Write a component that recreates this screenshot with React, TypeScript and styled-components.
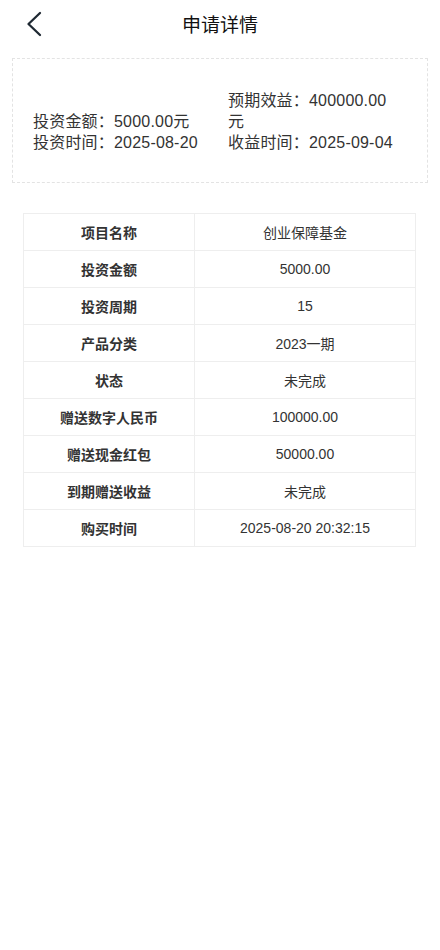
import React from 'react';
import styled, { createGlobalStyle } from 'styled-components';

const GlobalStyle = createGlobalStyle`
  html, body {
    margin: 0;
    padding: 0;
    background: #fff;
  }
  body {
    font-family: "Liberation Sans", Arial, "Noto Sans CJK SC", sans-serif;
    color: #333;
  }
`;

const Page = styled.div`
  width: 440px;
  min-height: 950px;
  background: #fff;
`;

const TopBar = styled.header`
  position: relative;
  height: 46px;
  display: flex;
  align-items: center;
  justify-content: center;
`;

const BackButton = styled.button`
  position: absolute;
  left: 22px;
  top: 10px;
  width: 24px;
  height: 28px;
  padding: 0;
  border: none;
  background: none;
  display: flex;
  align-items: center;
  justify-content: center;
`;

const Title = styled.h1`
  margin: 0;
  font-size: 19px;
  font-weight: normal;
  color: #111;
`;

const Summary = styled.section`
  margin: 12px 12px 0;
  height: 125px;
  box-sizing: border-box;
  border: 1px dashed #e3e3e3;
  padding: 2px 20px 0;
  display: grid;
  grid-template-columns: 195px 170px;
  align-content: center;
  align-items: end;
  font-size: 16px;
  line-height: 21px;
  letter-spacing: 0.2px;
  color: #333;
`;

const SummaryItem = styled.div``;

const Table = styled.table`
  margin: 30px 0 0 23px;
  width: 393px;
  border-collapse: collapse;
  font-size: 14px;
  color: #333;
`;

const Cell = styled.td<{ $label?: boolean }>`
  height: 36px;
  padding: 0;
  border: 1px solid #eeeeee;
  text-align: center;
  font-weight: ${(p) => (p.$label ? 'bold' : 'normal')};
  width: ${(p) => (p.$label ? '170px' : 'auto')};
`;

const rows: [string, string][] = [
  ['项目名称', '创业保障基金'],
  ['投资金额', '5000.00'],
  ['投资周期', '15'],
  ['产品分类', '2023一期'],
  ['状态', '未完成'],
  ['赠送数字人民币', '100000.00'],
  ['赠送现金红包', '50000.00'],
  ['到期赠送收益', '未完成'],
  ['购买时间', '2025-08-20 20:32:15'],
];

export default function App() {
  return (
    <Page>
      <GlobalStyle />
      <TopBar>
        <BackButton aria-label="返回">
          <svg width="18" height="26" viewBox="0 0 18 26" fill="none">
            <path d="M15 2 L3.5 13 L15 24" stroke="#1f2933" strokeWidth="2.3" strokeLinecap="round" strokeLinejoin="round" />
          </svg>
        </BackButton>
        <Title>申请详情</Title>
      </TopBar>
      <Summary>
        <SummaryItem>投资金额：5000.00元</SummaryItem>
        <SummaryItem>预期效益：400000.00元</SummaryItem>
        <SummaryItem>投资时间：2025-08-20</SummaryItem>
        <SummaryItem>收益时间：2025-09-04</SummaryItem>
      </Summary>
      <Table>
        <tbody>
          {rows.map(([label, value]) => (
            <tr key={label}>
              <Cell $label>{label}</Cell>
              <Cell>{value}</Cell>
            </tr>
          ))}
        </tbody>
      </Table>
    </Page>
  );
}
